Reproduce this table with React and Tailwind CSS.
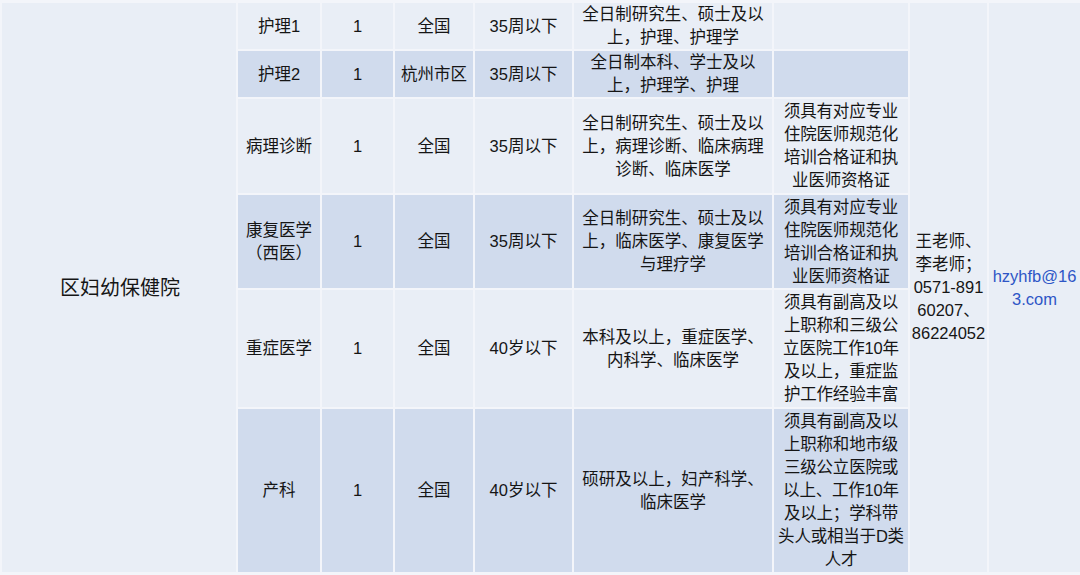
import React from "react";

const L = "bg-[#e9eef6]";
const D = "bg-[#d0dbed]";

function Lines({ lines }) {
  return (
    <>
      {lines.map((l, i) => (
        <div key={i} className="whitespace-nowrap">{l}</div>
      ))}
    </>
  );
}

const rows = [
  {
    h: "h-[48px]",
    bg: L,
    job: ["护理1"],
    n: "1",
    area: "全国",
    age: "35周以下",
    edu: ["全日制研究生、硕士及以", "上，护理、护理学"],
    req: [],
  },
  {
    h: "h-[47px]",
    bg: D,
    job: ["护理2"],
    n: "1",
    area: "杭州市区",
    age: "35周以下",
    edu: ["全日制本科、学士及以", "上，护理学、护理"],
    req: [],
  },
  {
    h: "h-[96px]",
    bg: L,
    job: ["病理诊断"],
    n: "1",
    area: "全国",
    age: "35周以下",
    edu: ["全日制研究生、硕士及以", "上，病理诊断、临床病理", "诊断、临床医学"],
    req: ["须具有对应专业", "住院医师规范化", "培训合格证和执", "业医师资格证"],
  },
  {
    h: "h-[95px]",
    bg: D,
    job: ["康复医学", "（西医）"],
    n: "1",
    area: "全国",
    age: "35周以下",
    edu: ["全日制研究生、硕士及以", "上，临床医学、康复医学", "与理疗学"],
    req: ["须具有对应专业", "住院医师规范化", "培训合格证和执", "业医师资格证"],
  },
  {
    h: "h-[119px]",
    bg: L,
    job: ["重症医学"],
    n: "1",
    area: "全国",
    age: "40岁以下",
    edu: ["本科及以上，重症医学、", "内科学、临床医学"],
    req: ["须具有副高及以", "上职称和三级公", "立医院工作10年", "及以上，重症监", "护工作经验丰富"],
  },
  {
    h: "h-[165px]",
    bg: D,
    job: ["产科"],
    n: "1",
    area: "全国",
    age: "40岁以下",
    edu: ["硕研及以上，妇产科学、", "临床医学"],
    req: [
      "须具有副高及以",
      "上职称和地市级",
      "三级公立医院或",
      "以上、工作10年",
      "及以上；学科带",
      "头人或相当于D类",
      "人才",
    ],
  },
];

const td = "border-2 border-[#f3f5fa] p-0 text-center align-middle";

export default function App() {
  return (
    <div
      className="w-[1080px] h-[575px] overflow-hidden bg-[#f3f5fa] text-[#151515] text-[16.5px] leading-[23px] pt-[1px]"
      style={{ fontFamily: '"Liberation Sans", "Noto Sans CJK SC", sans-serif' }}
    >
      <table className="table-fixed border-collapse w-[1080px]">
        <colgroup>
          <col className="w-[236px]" />
          <col className="w-[84px]" />
          <col className="w-[73px]" />
          <col className="w-[80px]" />
          <col className="w-[99px]" />
          <col className="w-[200px]" />
          <col className="w-[136px]" />
          <col className="w-[79px]" />
          <col className="w-[93px]" />
        </colgroup>
        <tbody>
          {rows.map((r, i) => (
            <tr key={i} className={r.h}>
              {i === 0 && (
                <td rowSpan={6} className={`${td} ${L} text-[20px] leading-[26px] pl-[2px]`}>
                  区妇幼保健院
                </td>
              )}
              <td className={`${td} ${r.bg}`}>
                <Lines lines={r.job} />
              </td>
              <td className={`${td} ${r.bg}`}>{r.n}</td>
              <td className={`${td} ${r.bg}`}>{r.area}</td>
              <td className={`${td} ${r.bg}`}>{r.age}</td>
              <td className={`${td} ${r.bg}`}>
                <Lines lines={r.edu} />
              </td>
              <td className={`${td} ${r.bg} tracking-[-0.2px]`}>
                <Lines lines={r.req} />
              </td>
              {i === 0 && (
                <td rowSpan={6} className={`${td} ${L}`}>
                  <Lines lines={["王老师、", "李老师；", "0571-891", "60207、", "86224052"]} />
                </td>
              )}
              {i === 0 && (
                <td rowSpan={6} className={`${td} ${L} text-[#2e56c6]`}>
                  <Lines lines={["hzyhfb@16", "3.com"]} />
                </td>
              )}
            </tr>
          ))}
        </tbody>
      </table>
    </div>
  );
}
